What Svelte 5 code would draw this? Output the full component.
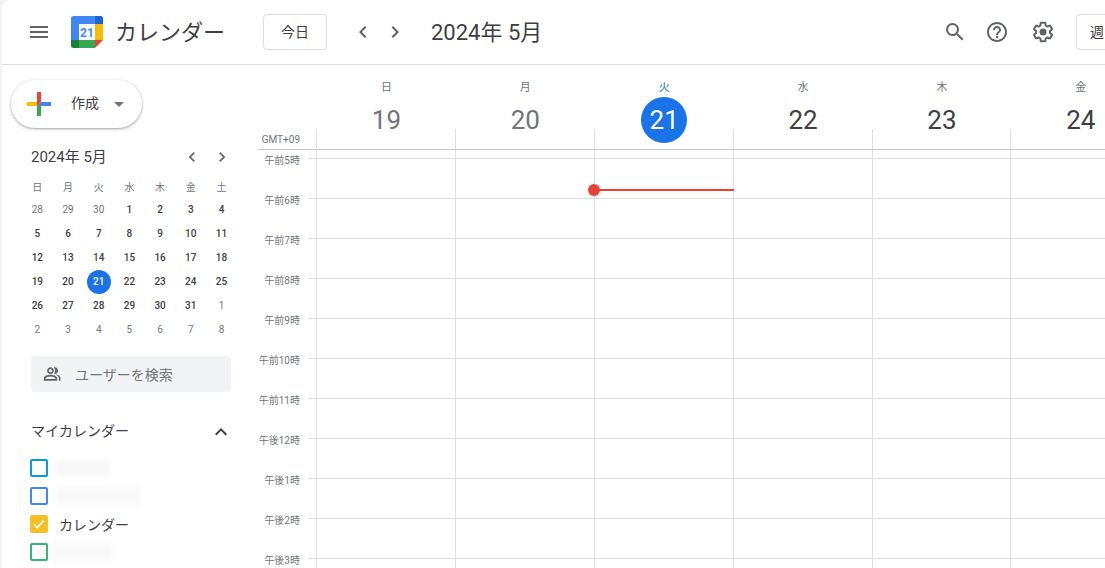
<script>
const mini = [
  [28,29,30,1,2,3,4],[5,6,7,8,9,10,11],[12,13,14,15,16,17,18],
  [19,20,21,22,23,24,25],[26,27,28,29,30,31,1],[2,3,4,5,6,7,8]
]
const weekdays = ['日','月','火','水','木','金','土']
const muted = (r, d) => (r === 0 && d > 20) || (r >= 4 && d < 10)
const days = [
  { w: '日', d: 19, past: true },
  { w: '月', d: 20, past: true },
  { w: '火', d: 21, today: true },
  { w: '水', d: 22 },
  { w: '木', d: 23 },
  { w: '金', d: 24 }
]
const hours = ['午前5時','午前6時','午前7時','午前8時','午前9時','午前10時','午前11時','午後12時','午後1時','午後2時','午後3時']
const cals = [
  { color: '#039be5', blur: 55, gap: 7 },
  { color: '#4285f4', blur: 85, gap: 7 },
  { color: '#f6bf26', name: 'カレンダー', on: true },
  { color: '#33b679', blur: 59, gap: 5 }
]
</script>

<div class="app">
  <header>
    <button class="icon menu" aria-label="メニュー">
      <svg width="24" height="24" viewBox="0 0 24 24"><path fill="#5f6368" d="M3 18h18v-2H3v2zm0-5h18v-2H3v2zm0-7v2h18V6H3z"/></svg>
    </button>
    <svg class="logo" width="32" height="32" viewBox="0 0 32 32">
      <path fill="#4285f4" d="M8 0h16v8H8z"/>
      <path fill="#1967d2" d="M24 0h5.500A2.500 2.500 0 0 1 32 2.500V8h-8z"/>
      <path fill="#fbbc04" d="M24 8h8v16h-8z"/>
      <path fill="#34a853" d="M8 24h16v8H8z"/>
      <path fill="#188038" d="M0 24h8v8H2.500A2.500 2.500 0 0 1 0 29.500z"/>
      <path fill="#ea4335" d="M24 24h8l-8 8z"/>
      <path fill="#4285f4" d="M0 8h8v16H0zM2.500 0H8v8H0V2.500A2.500 2.500 0 0 1 2.500 0z"/>
      <rect x="8" y="8" width="16" height="16" fill="#fff"/>
      <text x="16" y="20.500" text-anchor="middle" class="logo-num">21</text>
    </svg>
    <span class="brand">カレンダー</span>
    <button class="outline today-btn">今日</button>
    <button class="icon nav" aria-label="前へ">
      <svg width="24" height="24" viewBox="0 0 24 24"><path fill="#5f6368" d="M15.410 7.410 14 6l-6 6 6 6 1.410-1.410L10.830 12z"/></svg>
    </button>
    <button class="icon nav" aria-label="次へ">
      <svg width="24" height="24" viewBox="0 0 24 24"><path fill="#5f6368" d="M10 6 8.590 7.410 13.170 12l-4.580 4.590L10 18l6-6z"/></svg>
    </button>
    <span class="range">2024年 5月</span>
    <div class="tools">
      <svg width="24" height="24" viewBox="0 0 24 24"><path fill="#5f6368" d="M15.500 14h-.790l-.280-.270A6.471 6.471 0 0 0 16 9.500 6.500 6.500 0 1 0 9.500 16c1.610 0 3.090-.590 4.230-1.570l.270.280v.790l5 4.990L20.490 19l-4.990-5zm-6 0C7.010 14 5 11.990 5 9.500S7.010 5 9.500 5 14 7.010 14 9.500 11.990 14 9.500 14z"/></svg>
      <svg width="24" height="24" viewBox="0 0 24 24"><path fill="#5f6368" d="M11 18h2v-2h-2v2zm1-16C6.480 2 2 6.480 2 12s4.480 10 10 10 10-4.480 10-10S17.520 2 12 2zm0 18c-4.410 0-8-3.590-8-8s3.590-8 8-8 8 3.590 8 8-3.590 8-8 8zm0-14c-2.210 0-4 1.790-4 4h2c0-1.100.9-2 2-2s2 .9 2 2c0 2-3 1.750-3 5h2c0-2.250 3-2.500 3-5 0-2.210-1.790-4-4-4z"/></svg>
      <svg class="gear" width="24" height="24" viewBox="0 0 24 24"><path fill="#5f6368" d="M13.850 22.250h-3.700c-.74 0-1.360-.54-1.470-1.270l-.27-1.890c-.27-.14-.53-.29-.79-.46l-1.800.72c-.7.260-1.470-.030-1.810-.65L2.200 15.530c-.35-.66-.2-1.440.36-1.880l1.530-1.190c-.010-.150-.020-.300-.020-.460 0-.150.010-.310.020-.460l-1.520-1.190c-.590-.450-.740-1.260-.370-1.880l1.850-3.190c.34-.620 1.110-.900 1.790-.630l1.810.730c.260-.170.520-.320.780-.460l.27-1.910c.1-.700.720-1.250 1.460-1.250h3.700c.74 0 1.360.54 1.470 1.270l.27 1.890c.27.140.53.290.79.460l1.800-.720c.710-.260 1.480.030 1.820.65l1.840 3.180c.36.660.2 1.440-.36 1.880l-1.520 1.190c.010.150.020.300.020.460s-.010.310-.020.460l1.520 1.190c.56.450.720 1.230.37 1.860l-1.860 3.220c-.34.620-1.110.900-1.800.630l-1.800-.720c-.260.170-.520.320-.780.460l-.27 1.910c-.1.680-.72 1.220-1.460 1.220zm-3.230-2h2.760l.37-2.550.53-.220c.44-.180.880-.440 1.340-.780l.45-.340 2.380.960 1.380-2.400-2.030-1.580.070-.560c.030-.260.060-.510.060-.780s-.030-.530-.060-.780l-.070-.560 2.030-1.580-1.390-2.400-2.390.960-.450-.350c-.420-.320-.870-.580-1.330-.770l-.520-.220-.37-2.550h-2.760l-.37 2.550-.530.210c-.440.190-.880.440-1.340.790l-.450.330-2.380-.950-1.390 2.390 2.030 1.580-.070.560a7 7 0 0 0-.060.790c0 .260.020.530.060.780l.070.560-2.030 1.580 1.380 2.400 2.390-.960.450.350c.430.330.860.580 1.330.770l.53.220.38 2.550z"/><circle fill="#5f6368" cx="12" cy="12" r="3.500"/></svg>
    </div>
    <button class="outline view">週</button>
  </header>

  <div class="body">
    <aside>
      <button class="create">
        <svg width="36" height="36" viewBox="0 0 36 36">
          <path fill="#34a853" d="M16 16v14h4V20z"/>
          <path fill="#4285f4" d="M30 16H20l-4 4h14z"/>
          <path fill="#fbbc05" d="M6 16v4h10l4-4z"/>
          <path fill="#ea4335" d="M20 16V6h-4v14z"/>
        </svg>
        <span>作成</span>
        <i class="caret"></i>
      </button>

      <div class="mini-head">
        <span>2024年 5月</span>
        <div class="mini-nav">
          <svg width="20" height="20" viewBox="0 0 24 24"><path fill="#5f6368" d="M15.410 7.410 14 6l-6 6 6 6 1.410-1.410L10.830 12z"/></svg>
          <svg width="20" height="20" viewBox="0 0 24 24"><path fill="#5f6368" d="M10 6 8.590 7.410 13.170 12l-4.580 4.590L10 18l6-6z"/></svg>
        </div>
      </div>
      <div class="mini">
        {#each weekdays as w}
          <span class="wd">{w}</span>
        {/each}
        {#each mini as row, r}
          {#each row as d}
            <span class="md" class:muted={muted(r, d)}>
              {#if r === 3 && d === 21}<b>{d}</b>{:else}{d}{/if}
            </span>
          {/each}
        {/each}
      </div>

      <div class="people">
        <svg width="20" height="20" viewBox="0 0 24 24"><path fill="#5f6368" d="M9 13c-2.670 0-8 1.340-8 4v3h16v-3c0-2.660-5.330-4-8-4zm6 5H3v-.990C3.200 16.290 6.300 15 9 15s5.800 1.290 6 2v1zM9 12c2.210 0 4-1.790 4-4s-1.790-4-4-4-4 1.790-4 4 1.790 4 4 4zm0-6c1.100 0 2 .9 2 2s-.9 2-2 2-2-.9-2-2 .9-2 2-2zm6.390 6.200c2.110.55 5.610 1.850 5.610 4.800v3h-2v-3c0-1.680-1.400-2.820-3.610-4.800zM14 4c-.3 0-.58.050-.86.130C14 5.150 14.500 6.520 14.500 8s-.5 2.850-1.360 3.870c.28.080.56.130.86.130 2.210 0 4-1.790 4-4s-1.790-4-4-4z"/></svg>
        <span>ユーザーを検索</span>
      </div>

      <div class="section">
        <span>マイカレンダー</span>
        <svg width="24" height="24" viewBox="0 0 24 24"><path fill="#3c4043" d="M7.410 15.410 12 10.830l4.590 4.580L18 14l-6-6-6 6z"/></svg>
      </div>
      <ul>
        {#each cals as c}
          <li>
            <span class="check" style="border-color:{c.color};background:{c.on ? c.color : 'transparent'}">
              {#if c.on}
                <svg width="14" height="14" viewBox="0 0 24 24"><path fill="none" stroke="#fff" stroke-width="3" d="M4 13l5 5L20 6"/></svg>
              {/if}
            </span>
            {#if c.name}
              <span class="cal-name">{c.name}</span>
            {:else}
              <span class="smudge" style="width:{c.blur}px;margin-left:{c.gap}px"></span>
            {/if}
          </li>
        {/each}
      </ul>
    </aside>

    <main>
      <div class="day-head">
        <div class="gutter"><span>GMT+09</span></div>
        {#each days as day}
          <div class="day" class:past={day.past} class:today={day.today}>
            <span class="w">{day.w}</span>
            <span class="d">{day.d}</span>
          </div>
        {/each}
      </div>
      <div class="grid">
        <div class="times">
          {#each hours as h}
            <div class="time"><span>{h}</span></div>
          {/each}
        </div>
        {#each days as day}
          <div class="col">
            {#if day.today}
              <div class="now"></div>
            {/if}
          </div>
        {/each}
      </div>
    </main>
  </div>
</div>

<style>
:global(body) {
  margin: 0;
  overflow: hidden;
  background: #f1f3f4;
}
.app {
  width: 1105px;
  height: 568px;
  margin-left: 2px;
  overflow: hidden;
  background: #fff;
  border-top-left-radius: 8px;
  font-family: Roboto, "Noto Sans CJK JP", sans-serif;
  color: #3c4043;
}
button {
  border: 0;
  padding: 0;
  background: none;
  font: inherit;
  color: inherit;
}
header {
  display: flex;
  align-items: center;
  height: 64px;
  border-bottom: 1px solid #dadce0;
  padding-left: 25px;
}
.icon {
  display: flex;
}
.menu {
  margin-right: 20px;
}
.logo-num {
  font: 700 12px Roboto, sans-serif;
  fill: #4285f4;
}
.brand {
  margin-left: 12px;
  width: 148px;
  padding-bottom: 4px;
  font-size: 22px;
  color: #3c4043;
}
.outline {
  height: 36px;
  padding-bottom: 2px;
  border: 1px solid #dadce0;
  border-radius: 4px;
  font-size: 14px;
  color: #3c4043;
}
.today-btn {
  width: 64px;
  margin-right: 24px;
}
.nav {
  margin-right: 8px;
}
.range {
  margin-left: 16px;
  padding-bottom: 4px;
  font-size: 22px;
  color: #3c4043;
}
.tools {
  display: flex;
  gap: 18px;
  margin-left: auto;
  margin-right: 21px;
}
.gear {
  margin-left: 4px;
}
.view {
  flex: none;
  width: 96px;
  margin-right: -65px;
  text-align: left;
  padding-left: 13px;
}
.body {
  display: flex;
}
aside {
  flex: none;
  width: 250px;
  box-sizing: border-box;
  padding: 15px 0 0 9px;
}
.create {
  display: flex;
  align-items: center;
  width: 131px;
  height: 48px;
  border-radius: 24px;
  background: #fff;
  box-shadow: 0 1px 2px 0 rgba(60,64,67,.3), 0 1px 3px 1px rgba(60,64,67,.15);
  font-size: 14px;
  color: #3c4043;
}
.create svg {
  margin-left: 10px;
}
.create span {
  margin-left: 14px;
  padding-bottom: 4px;
}
.caret {
  margin-left: 15px;
  border: 5px solid transparent;
  border-top-color: #70757a;
  border-bottom: 0;
}
.mini-head {
  display: flex;
  align-items: center;
  justify-content: space-between;
  margin: 19px 0 0 20px;
  height: 20px;
  width: 201px;
  font-size: 15px;
}
.mini-head span {
  padding-bottom: 4px;
}
.mini-nav {
  display: flex;
  gap: 10px;
}
.mini {
  display: grid;
  grid-template-columns: repeat(7, 30.700px);
  grid-auto-rows: 24px;
  margin: 7px 0 0 11px;
  width: 215px;
  text-align: center;
  line-height: 24px;
  font-size: 10px;
  font-weight: 500;
  color: #3c4043;
}
.wd {
  font-weight: 400;
  color: #70757a;
  line-height: 28px;
}
.md.muted {
  color: #70757a;
  font-weight: 400;
}
.md b {
  display: block;
  width: 24px;
  height: 24px;
  margin: 0 auto;
  border-radius: 50%;
  background: #1a73e8;
  color: #fff;
  font-weight: 500;
}
.people {
  display: flex;
  align-items: center;
  width: 200px;
  height: 36px;
  margin: 14px 0 0 20px;
  box-sizing: border-box;
  padding-left: 12px;
  gap: 12px;
  border-radius: 4px;
  background: #f1f3f4;
  font-size: 14px;
  color: #70757a;
}
.section {
  display: flex;
  align-items: center;
  justify-content: space-between;
  width: 202px;
  height: 24px;
  margin: 26px 0 0 20px;
  font-size: 14px;
}
.section svg {
  margin-top: 4px;
}
ul {
  list-style: none;
  margin: 12px 0 0 19px;
  padding: 0;
}
li {
  display: flex;
  align-items: center;
  height: 28px;
  font-size: 14px;
}
.check {
  flex: none;
  display: flex;
  align-items: center;
  justify-content: center;
  box-sizing: border-box;
  width: 18px;
  height: 18px;
  border: 2px solid;
  border-radius: 2px;
}
.cal-name {
  margin-left: 11px;
}
.smudge {
  height: 18px;
  background: #f8f8f8;
  filter: blur(2px);
}
main {
  flex: 1;
  min-width: 0;
}
.day-head {
  display: flex;
  height: 84px;
  margin-left: 6px;
  border-bottom: 1px solid #c4c6c9;
}
.gutter {
  position: relative;
  flex: none;
  width: 59px;
  display: flex;
  justify-content: flex-end;
  align-items: flex-end;
}
.gutter::after,
.day::after {
  content: '';
  position: absolute;
  right: 0;
  bottom: 0;
  width: 1px;
  height: 20px;
  background: #dadce0;
}
.gutter span {
  margin: 0 17px 4px 0;
  font-size: 10px;
  color: #70757a;
}
.day {
  position: relative;
  flex: none;
  width: 138.880px;
  height: 84px;
  display: flex;
  flex-direction: column;
  align-items: center;
  text-align: center;
}
.w {
  margin-top: 16px;
  font-size: 11px;
  line-height: 14px;
  color: #70757a;
}
.d {
  width: 46px;
  height: 46px;
  margin-top: 2px;
  border-radius: 50%;
  font-size: 26px;
  line-height: 46px;
  color: #3c4043;
}
.day.past .d {
  color: #70757a;
}
.day.today .w {
  color: #1a73e8;
}
.day.today .d {
  position: relative;
  z-index: 1;
  background: #1a73e8;
  color: #fff;
}
.grid {
  display: flex;
}
.times {
  flex: none;
  width: 65px;
  margin-top: -2px;
  height: 440px;
  box-sizing: border-box;
  border-right: 1px solid #dadce0;
  background: repeating-linear-gradient(to bottom, transparent 0, transparent 10px, #dadce0 10px, #dadce0 11px, transparent 11px, transparent 40px) right top / 8px 100% no-repeat;
}
.time {
  display: flex;
  justify-content: flex-end;
  height: 40px;
  line-height: 26px;
  font-size: 10px;
  color: #70757a;
}
.time span {
  margin-right: 16px;
}
.col {
  position: relative;
  flex: none;
  width: 138.880px;
  height: 420px;
  box-sizing: border-box;
  border-right: 1px solid #dadce0;
  background: repeating-linear-gradient(to bottom, transparent 0, transparent 8px, #dadce0 8px, #dadce0 9px, transparent 9px, transparent 40px);
}
.now {
  position: absolute;
  left: -1px;
  right: -1px;
  top: 39px;
  height: 2px;
  background: #ea4335;
}
.now::before {
  content: '';
  position: absolute;
  left: -6px;
  top: -5px;
  width: 12px;
  height: 12px;
  border-radius: 50%;
  background: #ea4335;
}
</style>
